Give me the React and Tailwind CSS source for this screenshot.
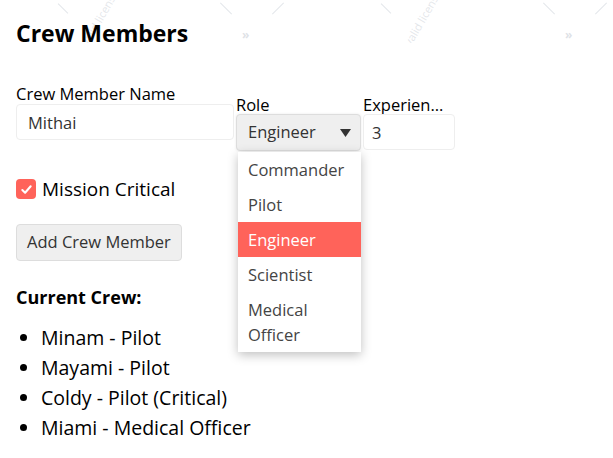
import React, { useState } from 'react'

const roles = ['Commander', 'Pilot', 'Engineer', 'Scientist', 'Medical Officer']

const crew = [
  'Minam - Pilot',
  'Mayami - Pilot',
  'Coldy - Pilot (Critical)',
  'Miami - Medical Officer'
]

function Watermark({ x }) {
  return (
    <div className="absolute top-0 h-[43px] w-[260px] overflow-hidden pointer-events-none" style={{ left: x }}>
      <div className="absolute left-[14px] top-[8px] h-[1px] w-[14px] bg-gray-300/60 rotate-45" />
      <div className="absolute left-[20px] top-[14px] -rotate-[60deg] text-[11px] text-gray-300/60 whitespace-nowrap">
        invalid license
      </div>
      <div className="absolute left-[176px] top-[8px] h-[1px] w-[16px] bg-gray-300/60 rotate-45" />
      <div className="absolute left-[228px] top-[8px] h-[1px] w-[16px] bg-gray-300/60 -rotate-45" />
      <div className="absolute left-[200px] top-[26px] text-[12px] font-bold text-gray-300/70">»</div>
    </div>
  )
}

export default function App() {
  const [name, setName] = useState('Mithai')
  const [role] = useState('Engineer')
  const [exp, setExp] = useState('3')
  const [critical, setCritical] = useState(true)

  return (
    <div className="relative min-h-screen overflow-hidden bg-white px-4 text-black" style={{ fontFamily: '"Open Sans", "Noto Sans", sans-serif' }}>
      <Watermark x={42} />
      <Watermark x={365} />

      <h1 className="relative pt-[17px] text-[23px] font-bold leading-[32px]">Crew Members</h1>

      {/* Form row */}
      <div className="mt-[35px] flex items-start">
        <div className="flex w-[218px] flex-col">
          <label className="text-[16.5px] leading-[20px]">Crew Member Name</label>
          <input
            value={name}
            onChange={(e) => setName(e.target.value)}
            className="h-[36px] w-full rounded-[4px] border border-[#eeeeee] px-[11px] text-[16.5px] text-[#333] outline-none"
          />
        </div>

        <div className="relative ml-[2px] mt-[12px] flex w-[125px] flex-col">
          <label className="text-[16.5px] leading-[18px]">Role</label>
          <div className="flex h-[37px] items-center justify-between rounded-[4px] border border-[#dddddd] bg-[#efefef] pl-[11px] pr-[9px] text-[16.5px] text-[#333] shadow-[0_0_3px_rgba(0,0,0,0.08)]">
            <span>{role}</span>
            <svg width="11" height="8" viewBox="0 0 11 8">
              <path d="M0 0 H11 L5.5 8 Z" fill="#333" />
            </svg>
          </div>

          {/* open list */}
          <div className="absolute left-[2px] top-[56px] z-10 w-[123px] bg-white shadow-[0_3px_10px_rgba(0,0,0,0.25)]">
            {roles.map((r) => (
              <div
                key={r}
                className={`px-[10px] py-[5px] text-[16.5px] leading-[25px] ${
                  r === role ? 'bg-[#ff635a] text-white' : 'text-[#444]'
                }`}
              >
                {r}
              </div>
            ))}
          </div>
        </div>

        <div className="ml-[2px] mt-[12px] flex w-[92px] flex-col">
          <label className="w-[82px] truncate text-[16.5px] leading-[18px]">Experience</label>
          <input
            value={exp}
            onChange={(e) => setExp(e.target.value)}
            className="h-[36px] w-full rounded-[4px] border border-[#eeeeee] px-[8px] text-[16.5px] text-[#333] outline-none"
          />
        </div>
      </div>

      {/* Checkbox */}
      <label className="mt-[24px] flex items-center gap-[6px] text-[19px]">
        <span
          onClick={() => setCritical(!critical)}
          className="flex h-[20px] w-[20px] items-center justify-center rounded-[4px] bg-[#ff635a]"
        >
          {critical && (
            <svg width="13" height="13" viewBox="0 0 14 14" fill="none">
              <path d="M2.5 7.5 L5.5 10.5 L11.5 3.5" stroke="white" strokeWidth="2.2" strokeLinecap="round" strokeLinejoin="round" />
            </svg>
          )}
        </span>
        Mission Critical
      </label>

      <button className="mt-[20px] h-[37px] rounded-[4px] border border-[#dddddd] bg-[#efefef] px-[10px] text-[16.5px] text-[#333]">
        Add Crew Member
      </button>

      <h3 className="mt-[24px] text-[18px] font-bold leading-[24px]">Current Crew:</h3>

      <ul className="mt-[14px] list-disc pl-[25px] text-[19.5px] leading-[30px]">
        {crew.map((c) => (
          <li key={c}>{c}</li>
        ))}
      </ul>
    </div>
  )
}
